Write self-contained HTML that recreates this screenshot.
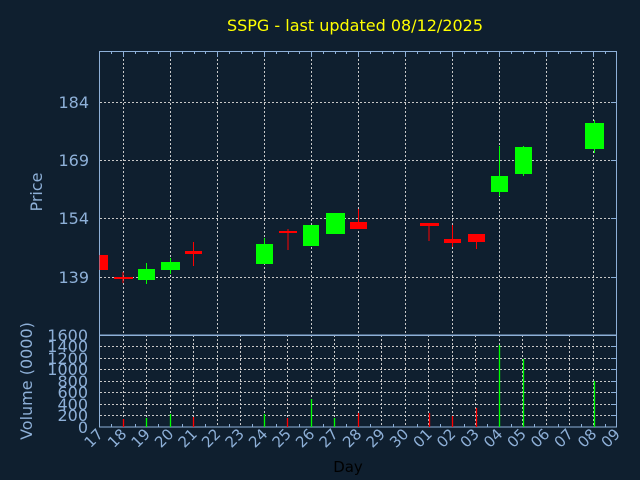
<!DOCTYPE html>
<html><head><meta charset="utf-8"><style>
html,body{margin:0;padding:0;background:#0f1f2f;}
svg{display:block;}
text{font-family:"DejaVu Sans","Liberation Sans",sans-serif;}
</style></head><body>
<svg width="640" height="480" viewBox="0 0 640 480" xmlns="http://www.w3.org/2000/svg">
<rect width="640" height="480" fill="#0f1f2f"/>
<text x="355" y="31" fill="#ffff00" font-size="16" text-anchor="middle">SSPG - last updated 08/12/2025</text>
<!-- price grid -->
<g stroke="#c8c8c8" stroke-width="1" stroke-dasharray="2,2">
<line x1="100" y1="102.5" x2="616" y2="102.5"/>
<line x1="100" y1="160.5" x2="616" y2="160.5"/>
<line x1="100" y1="218.5" x2="616" y2="218.5"/>
<line x1="100" y1="277.5" x2="616" y2="277.5"/>
<line x1="123.5" y1="51" x2="123.5" y2="335"/>
<line x1="170.5" y1="51" x2="170.5" y2="335"/>
<line x1="217.5" y1="51" x2="217.5" y2="335"/>
<line x1="264.5" y1="51" x2="264.5" y2="335"/>
<line x1="311.5" y1="51" x2="311.5" y2="335"/>
<line x1="358.5" y1="51" x2="358.5" y2="335"/>
<line x1="405.5" y1="51" x2="405.5" y2="335"/>
<line x1="452.5" y1="51" x2="452.5" y2="335"/>
<line x1="499.5" y1="51" x2="499.5" y2="335"/>
<line x1="546.5" y1="51" x2="546.5" y2="335"/>
<line x1="593.5" y1="51" x2="593.5" y2="335"/>
</g>
<!-- volume grid -->
<g stroke="#c8c8c8" stroke-width="1" stroke-dasharray="2,2">
<line x1="100" y1="346.5" x2="616" y2="346.5"/>
<line x1="100" y1="358.5" x2="616" y2="358.5"/>
<line x1="100" y1="369.5" x2="616" y2="369.5"/>
<line x1="100" y1="381.5" x2="616" y2="381.5"/>
<line x1="100" y1="392.5" x2="616" y2="392.5"/>
<line x1="100" y1="404.5" x2="616" y2="404.5"/>
<line x1="100" y1="415.5" x2="616" y2="415.5"/>
<line x1="123.5" y1="335" x2="123.5" y2="427"/>
<line x1="146.5" y1="335" x2="146.5" y2="427"/>
<line x1="170.5" y1="335" x2="170.5" y2="427"/>
<line x1="193.5" y1="335" x2="193.5" y2="427"/>
<line x1="217.5" y1="335" x2="217.5" y2="427"/>
<line x1="240.5" y1="335" x2="240.5" y2="427"/>
<line x1="264.5" y1="335" x2="264.5" y2="427"/>
<line x1="287.5" y1="335" x2="287.5" y2="427"/>
<line x1="311.5" y1="335" x2="311.5" y2="427"/>
<line x1="334.5" y1="335" x2="334.5" y2="427"/>
<line x1="358.5" y1="335" x2="358.5" y2="427"/>
<line x1="381.5" y1="335" x2="381.5" y2="427"/>
<line x1="405.5" y1="335" x2="405.5" y2="427"/>
<line x1="428.5" y1="335" x2="428.5" y2="427"/>
<line x1="452.5" y1="335" x2="452.5" y2="427"/>
<line x1="475.5" y1="335" x2="475.5" y2="427"/>
<line x1="499.5" y1="335" x2="499.5" y2="427"/>
<line x1="522.5" y1="335" x2="522.5" y2="427"/>
<line x1="546.5" y1="335" x2="546.5" y2="427"/>
<line x1="569.5" y1="335" x2="569.5" y2="427"/>
<line x1="593.5" y1="335" x2="593.5" y2="427"/>
</g>
<!-- axes -->
<g stroke="#8eb0d8" stroke-width="1" fill="none">
<rect x="99.5" y="51.5" width="517" height="283.5"/>
<rect x="99.5" y="335.5" width="517" height="91.5"/>
</g>
<g stroke="#8eb0d8" stroke-width="1">
<path d="M111.5 51v3M135.5 51v3M147.5 51v3M158.5 51v3M182.5 51v3M194.5 51v3M205.5 51v3M229.5 51v3M241.5 51v3M252.5 51v3M276.5 51v3M288.5 51v3M299.5 51v3M323.5 51v3M335.5 51v3M346.5 51v3M370.5 51v3M382.5 51v3M393.5 51v3M417.5 51v3M429.5 51v3M440.5 51v3M464.5 51v3M476.5 51v3M487.5 51v3M511.5 51v3M523.5 51v3M534.5 51v3M558.5 51v3M570.5 51v3M581.5 51v3M605.5 51v3"/>
<path d="M123.5 51v6M170.5 51v6M217.5 51v6M264.5 51v6M311.5 51v6M358.5 51v6M405.5 51v6M452.5 51v6M499.5 51v6M546.5 51v6M593.5 51v6"/>
<path d="M111.5 427v-3M135.5 427v-3M158.5 427v-3M182.5 427v-3M205.5 427v-3M229.5 427v-3M252.5 427v-3M276.5 427v-3M299.5 427v-3M323.5 427v-3M346.5 427v-3M370.5 427v-3M393.5 427v-3M417.5 427v-3M440.5 427v-3M464.5 427v-3M487.5 427v-3M511.5 427v-3M534.5 427v-3M558.5 427v-3M581.5 427v-3M605.5 427v-3"/>
<path d="M611 102.5h6M611 160.5h6M611 218.5h6M611 277.5h6M611 346.5h6M611 358.5h6M611 369.5h6M611 381.5h6M611 392.5h6M611 404.5h6M611 415.5h6"/>
</g>
<!-- candles -->
<g fill="#ff0000">
<rect x="99.5" y="255" width="8.5" height="15"/>
<rect x="114" y="277" width="19" height="2"/><rect x="122.5" y="272" width="1" height="11"/>
<rect x="185" y="251" width="17" height="3"/><rect x="193" y="242" width="1" height="24"/>
<rect x="279" y="231" width="18" height="2"/><rect x="287.5" y="229" width="1" height="21"/>
<rect x="350" y="222" width="17" height="7"/><rect x="358" y="209" width="1" height="13"/>
<rect x="420" y="223" width="19" height="3"/><rect x="428.5" y="223" width="1" height="18"/>
<rect x="444" y="239" width="17" height="4"/><rect x="452" y="225" width="1" height="22"/>
<rect x="468" y="234" width="17" height="8"/><rect x="476" y="234" width="1" height="15"/>
</g>
<g fill="#00ff00">
<rect x="138" y="269" width="17" height="11"/><rect x="146" y="263" width="1" height="21"/>
<rect x="161" y="262" width="19" height="8"/><rect x="170" y="258" width="1" height="16"/>
<rect x="256" y="244" width="17" height="20"/><rect x="264" y="238" width="1" height="6"/>
<rect x="303" y="225" width="16" height="21"/>
<rect x="326" y="213" width="19" height="21"/>
<rect x="491" y="176" width="17" height="16"/><rect x="499" y="146" width="1" height="50"/>
<rect x="515" y="147" width="17" height="27"/><rect x="523" y="146" width="1" height="30"/>
<rect x="585" y="123" width="19" height="26"/><rect x="594" y="120" width="1" height="33"/>
</g>
<!-- volumes -->
<g stroke-width="1.3">
<line x1="123.5" y1="419" x2="123.5" y2="427" stroke="#ff0000"/>
<line x1="146.5" y1="418" x2="146.5" y2="427" stroke="#00ff00"/>
<line x1="170.5" y1="414" x2="170.5" y2="427" stroke="#00ff00"/>
<line x1="193.5" y1="417" x2="193.5" y2="427" stroke="#ff0000"/>
<line x1="264.5" y1="414" x2="264.5" y2="427" stroke="#00ff00"/>
<line x1="287.5" y1="418" x2="287.5" y2="427" stroke="#ff0000"/>
<line x1="311.5" y1="399" x2="311.5" y2="427" stroke="#00ff00"/>
<line x1="334.5" y1="418" x2="334.5" y2="427" stroke="#00ff00"/>
<line x1="358.5" y1="413" x2="358.5" y2="427" stroke="#ff0000"/>
<line x1="429.5" y1="413" x2="429.5" y2="427" stroke="#ff0000"/>
<line x1="452.5" y1="416" x2="452.5" y2="427" stroke="#ff0000"/>
<line x1="476.5" y1="408" x2="476.5" y2="427" stroke="#ff0000"/>
<line x1="499.5" y1="345" x2="499.5" y2="427" stroke="#00ff00"/>
<line x1="523.5" y1="359" x2="523.5" y2="427" stroke="#00ff00"/>
<line x1="594.5" y1="381" x2="594.5" y2="427" stroke="#00ff00"/>
</g>
<!-- labels -->
<g fill="#8eb0d8" font-size="16" text-anchor="end">
<text x="89" y="108">184</text>
<text x="89" y="166">169</text>
<text x="89" y="224">154</text>
<text x="89" y="283">139</text>
<text x="88" y="341">1600</text>
<text x="88" y="352">1400</text>
<text x="88" y="364">1200</text>
<text x="88" y="375">1000</text>
<text x="88" y="387">800</text>
<text x="88" y="398">600</text>
<text x="88" y="410">400</text>
<text x="88" y="421">200</text>
<text x="88" y="433">0</text>
</g>
<text transform="translate(42,192) rotate(-90)" fill="#8eb0d8" font-size="16" text-anchor="middle">Price</text>
<text transform="translate(32,381) rotate(-90)" fill="#8eb0d8" font-size="16" text-anchor="middle">Volume (0000)</text>
<g fill="#8eb0d8" font-size="15" text-anchor="end">
<text transform="translate(104,435) rotate(-45)">17</text>
<text transform="translate(127.5,435) rotate(-45)">18</text>
<text transform="translate(151,435) rotate(-45)">19</text>
<text transform="translate(174.5,435) rotate(-45)">20</text>
<text transform="translate(198,435) rotate(-45)">21</text>
<text transform="translate(221.5,435) rotate(-45)">22</text>
<text transform="translate(245,435) rotate(-45)">23</text>
<text transform="translate(268.5,435) rotate(-45)">24</text>
<text transform="translate(292,435) rotate(-45)">25</text>
<text transform="translate(315.5,435) rotate(-45)">26</text>
<text transform="translate(339,435) rotate(-45)">27</text>
<text transform="translate(362.5,435) rotate(-45)">28</text>
<text transform="translate(386,435) rotate(-45)">29</text>
<text transform="translate(409.5,435) rotate(-45)">30</text>
<text transform="translate(433,435) rotate(-45)">01</text>
<text transform="translate(456.5,435) rotate(-45)">02</text>
<text transform="translate(480,435) rotate(-45)">03</text>
<text transform="translate(503.5,435) rotate(-45)">04</text>
<text transform="translate(527,435) rotate(-45)">05</text>
<text transform="translate(550.5,435) rotate(-45)">06</text>
<text transform="translate(574,435) rotate(-45)">07</text>
<text transform="translate(597.5,435) rotate(-45)">08</text>
<text transform="translate(621,435) rotate(-45)">09</text>
</g>
<text x="348" y="472" fill="#000000" font-size="15" text-anchor="middle">Day</text>
</svg>
</body></html>
